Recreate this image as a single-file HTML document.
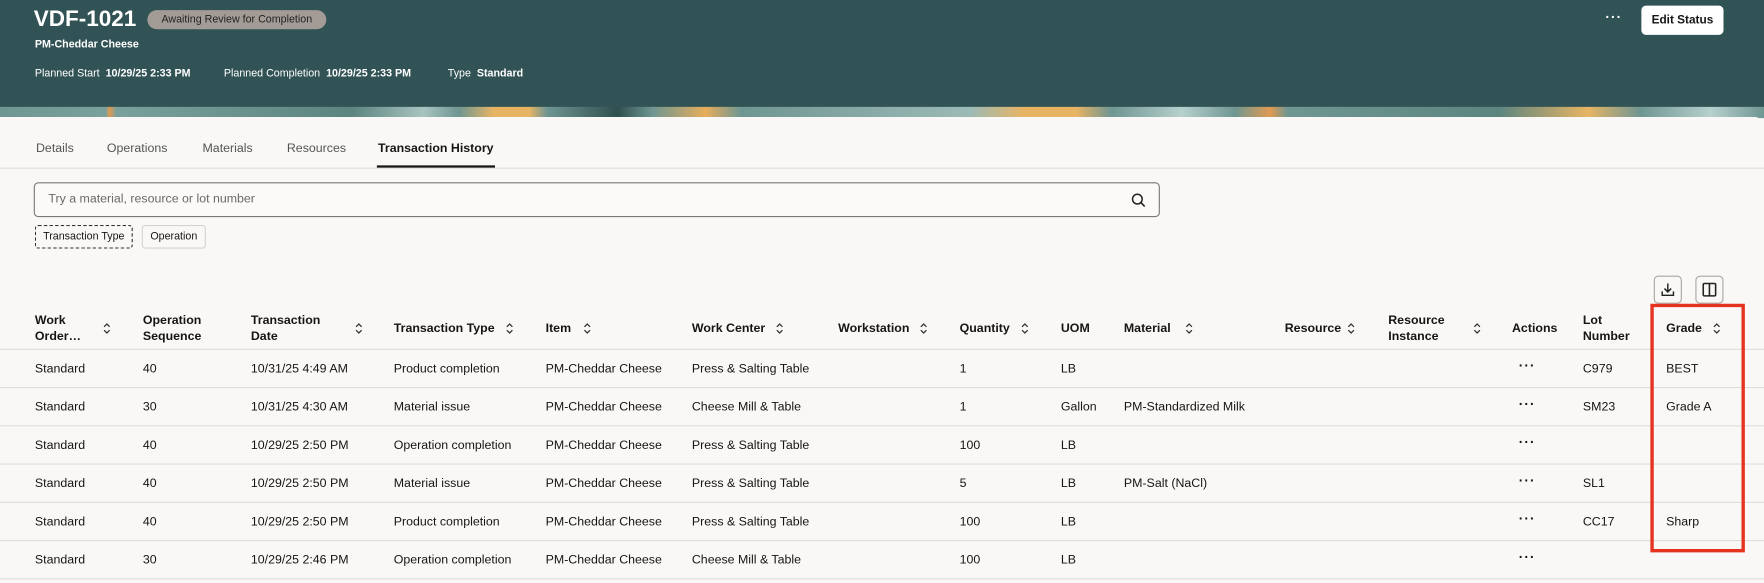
<!DOCTYPE html>
<html><head><meta charset="utf-8"><style>
*{margin:0;padding:0;box-sizing:border-box}
html,body{width:1764px;height:582px;overflow:hidden;background:#f9f8f6;font-family:"Liberation Sans",sans-serif;color:#161513}
#w{position:absolute;left:0;top:0;width:1568px;height:518px;transform:scale(1.125);transform-origin:0 0}
.a{position:absolute;white-space:nowrap}
.hdr{position:absolute;left:0;top:0;width:1568px;height:96px;background:#325355}
.band{position:absolute;left:0;top:95px;width:1568px;height:10px;background:linear-gradient(90deg,#6f9692 0,#7aa09b 6%,#e09a52 6.2%,#7aa09b 6.6%,#5d8580 20%,#a8c4c0 24%,#6f9692 26%,#e7b464 28%,#e7b464 30%,#6f9692 31%,#2f4f4f 35%,#6f9692 37%,#e6ad5c 40%,#6f9692 42%,#9cbab6 55%,#e7b464 58%,#e7b464 61%,#6f9692 63%,#b6d0cd 67%,#6f9692 70%,#e09a52 72%,#6f9692 73%,#5d8580 85%,#e7b464 90%,#6f9692 93%,#b6d0cd 97%,#6f9692 100%)}
.panel{position:absolute;left:0;top:104px;width:1566px;height:414px;background:#f9f8f6;border-top-right-radius:6px}
.h{position:absolute;white-space:nowrap;font-size:11px;font-weight:bold;line-height:14px}
.s{position:absolute;width:8px;height:12px}
.line{position:absolute;left:0;width:1568px;height:1px;background:#dfddd9}
.r{position:absolute;left:0;width:1568px;height:34px}
.r span{position:absolute;top:12px;font-size:11px;white-space:nowrap;line-height:13px}
.r .d{font-weight:bold;letter-spacing:1px;top:9px;font-size:12px}
</style></head><body><div id="w">
<div class="hdr"></div><div class="band"></div><div class="panel"></div>
<div class="a" style="left:30px;top:6px;font-size:20px;font-weight:bold;color:#fff">VDF-1021</div>
<div class="a" style="left:131px;top:9px;width:159px;height:17px;border-radius:9px;background:#a39c96;font-size:9.5px;line-height:17px;text-align:center;color:#222">Awaiting Review for Completion</div>
<div class="a" style="left:31px;top:34px;font-size:9.5px;font-weight:bold;color:#fff">PM-Cheddar Cheese</div>
<div class="a" style="left:31px;top:60px;font-size:9.5px;color:#fff">Planned Start&nbsp;&nbsp;<b>10/29/25 2:33 PM</b></div>
<div class="a" style="left:199px;top:60px;font-size:9.5px;color:#fff">Planned Completion&nbsp;&nbsp;<b>10/29/25 2:33 PM</b></div>
<div class="a" style="left:398px;top:60px;font-size:9.5px;color:#fff">Type&nbsp;&nbsp;<b>Standard</b></div>
<div class="a" style="left:1427px;top:8px;color:#fff;font-size:12px;font-weight:bold;letter-spacing:1px">···</div>
<div class="a" style="left:1459px;top:5px;width:73px;height:26px;background:#fff;border-radius:4px;font-size:10.5px;font-weight:bold;line-height:26px;text-align:center">Edit Status</div>

<div class="a" style="left:32px;top:126px;font-size:11px;color:#555">Details</div>
<div class="a" style="left:95px;top:126px;font-size:11px;color:#555">Operations</div>
<div class="a" style="left:180px;top:126px;font-size:11px;color:#555">Materials</div>
<div class="a" style="left:255px;top:126px;font-size:11px;color:#555">Resources</div>
<div class="a" style="left:336px;top:126px;font-size:11px;font-weight:bold">Transaction History</div>
<div class="line" style="top:149px"></div>
<div class="a" style="left:335px;top:147px;width:105px;height:2px;background:#161513"></div>

<div class="a" style="left:30px;top:162px;width:1001px;height:31px;border:1px solid #7b7874;border-radius:4px;background:#fbfaf9"></div>
<div class="a" style="left:43px;top:171px;font-size:11px;color:#6b6966">Try a material, resource or lot number</div>
<svg class="a" style="left:1005px;top:171px" width="14" height="14" viewBox="0 0 14 14"><circle cx="6" cy="6" r="4.3" fill="none" stroke="#222" stroke-width="1.3"/><path d="M9.2 9.2 12.5 12.5" stroke="#222" stroke-width="1.4"/></svg>
<div class="a" style="left:31px;top:200px;width:87px;height:21px;border:1px dashed #333;border-radius:3px;font-size:9.5px;line-height:19px;text-align:center">Transaction Type</div>
<div class="a" style="left:126px;top:200px;width:57px;height:21px;border:1px solid #d6d3cf;border-radius:3px;font-size:9.5px;line-height:19px;text-align:center">Operation</div>

<div class="a" style="left:1470px;top:245px;width:25px;height:25px;border:1px solid #aaa6a1;border-radius:4px"></div>
<svg class="a" style="left:1475px;top:250px" width="15" height="15" viewBox="0 0 15 15"><path d="M7.5 2v7M4.5 6.5l3 3 3-3M2.5 9v3.5h10V9" fill="none" stroke="#222" stroke-width="1.3"/></svg>
<div class="a" style="left:1507px;top:245px;width:25px;height:25px;border:1px solid #aaa6a1;border-radius:4px"></div>
<svg class="a" style="left:1512px;top:250px" width="15" height="15" viewBox="0 0 15 15"><rect x="2" y="2" width="11" height="11" rx="1" fill="none" stroke="#222" stroke-width="1.4"/><path d="M7.5 2v11" stroke="#222" stroke-width="1.4"/></svg>

<svg width="0" height="0" style="position:absolute"><defs><symbol id="srt" viewBox="0 0 8 12"><path d="M1.5 4.5 4 2l2.5 2.5M1.5 7.5 4 10l2.5-2.5" fill="none" stroke="#333" stroke-width="1.1"/></symbol></defs></svg>
<div class="h" style="left:31px;top:278px">Work<br>Order…</div><svg class="s" style="left:91px;top:286px"><use href="#srt"/></svg>
<div class="h" style="left:127px;top:278px">Operation<br>Sequence</div>
<div class="h" style="left:223px;top:278px">Transaction<br>Date</div><svg class="s" style="left:315px;top:286px"><use href="#srt"/></svg>
<div class="h" style="left:350px;top:285px">Transaction Type</div><svg class="s" style="left:449px;top:286px"><use href="#srt"/></svg>
<div class="h" style="left:485px;top:285px">Item</div><svg class="s" style="left:518px;top:286px"><use href="#srt"/></svg>
<div class="h" style="left:615px;top:285px">Work Center</div><svg class="s" style="left:689px;top:286px"><use href="#srt"/></svg>
<div class="h" style="left:745px;top:285px">Workstation</div><svg class="s" style="left:817px;top:286px"><use href="#srt"/></svg>
<div class="h" style="left:853px;top:285px">Quantity</div><svg class="s" style="left:907px;top:286px"><use href="#srt"/></svg>
<div class="h" style="left:943px;top:285px">UOM</div>
<div class="h" style="left:999px;top:285px">Material</div><svg class="s" style="left:1053px;top:286px"><use href="#srt"/></svg>
<div class="h" style="left:1142px;top:285px">Resource</div><svg class="s" style="left:1197px;top:286px"><use href="#srt"/></svg>
<div class="h" style="left:1234px;top:278px">Resource<br>Instance</div><svg class="s" style="left:1309px;top:286px"><use href="#srt"/></svg>
<div class="h" style="left:1344px;top:285px">Actions</div>
<div class="h" style="left:1407px;top:278px">Lot<br>Number</div>
<div class="h" style="left:1481px;top:285px">Grade</div><svg class="s" style="left:1522px;top:286px"><use href="#srt"/></svg>

<div class="line" style="top:310px"></div><div class="line" style="top:344px"></div><div class="line" style="top:378px"></div><div class="line" style="top:412px"></div><div class="line" style="top:446px"></div><div class="line" style="top:480px"></div><div class="line" style="top:514px"></div>

<div class="r" style="top:310px"><span style="left:31px">Standard</span><span style="left:127px">40</span><span style="left:223px">10/31/25 4:49 AM</span><span style="left:350px">Product completion</span><span style="left:485px">PM-Cheddar Cheese</span><span style="left:615px">Press &amp; Salting Table</span><span style="left:853px">1</span><span style="left:943px">LB</span><span class="d" style="left:1350px">···</span><span style="left:1407px">C979</span><span style="left:1481px">BEST</span></div>
<div class="r" style="top:344px"><span style="left:31px">Standard</span><span style="left:127px">30</span><span style="left:223px">10/31/25 4:30 AM</span><span style="left:350px">Material issue</span><span style="left:485px">PM-Cheddar Cheese</span><span style="left:615px">Cheese Mill &amp; Table</span><span style="left:853px">1</span><span style="left:943px">Gallon</span><span style="left:999px">PM-Standardized Milk</span><span class="d" style="left:1350px">···</span><span style="left:1407px">SM23</span><span style="left:1481px">Grade A</span></div>
<div class="r" style="top:378px"><span style="left:31px">Standard</span><span style="left:127px">40</span><span style="left:223px">10/29/25 2:50 PM</span><span style="left:350px">Operation completion</span><span style="left:485px">PM-Cheddar Cheese</span><span style="left:615px">Press &amp; Salting Table</span><span style="left:853px">100</span><span style="left:943px">LB</span><span class="d" style="left:1350px">···</span></div>
<div class="r" style="top:412px"><span style="left:31px">Standard</span><span style="left:127px">40</span><span style="left:223px">10/29/25 2:50 PM</span><span style="left:350px">Material issue</span><span style="left:485px">PM-Cheddar Cheese</span><span style="left:615px">Press &amp; Salting Table</span><span style="left:853px">5</span><span style="left:943px">LB</span><span style="left:999px">PM-Salt (NaCl)</span><span class="d" style="left:1350px">···</span><span style="left:1407px">SL1</span></div>
<div class="r" style="top:446px"><span style="left:31px">Standard</span><span style="left:127px">40</span><span style="left:223px">10/29/25 2:50 PM</span><span style="left:350px">Product completion</span><span style="left:485px">PM-Cheddar Cheese</span><span style="left:615px">Press &amp; Salting Table</span><span style="left:853px">100</span><span style="left:943px">LB</span><span class="d" style="left:1350px">···</span><span style="left:1407px">CC17</span><span style="left:1481px">Sharp</span></div>
<div class="r" style="top:480px"><span style="left:31px">Standard</span><span style="left:127px">30</span><span style="left:223px">10/29/25 2:46 PM</span><span style="left:350px">Operation completion</span><span style="left:485px">PM-Cheddar Cheese</span><span style="left:615px">Cheese Mill &amp; Table</span><span style="left:853px">100</span><span style="left:943px">LB</span><span class="d" style="left:1350px">···</span></div>

<div class="a" style="left:1467px;top:270px;width:84px;height:221px;border:3px solid #e5331f"></div>
</div></body></html>
